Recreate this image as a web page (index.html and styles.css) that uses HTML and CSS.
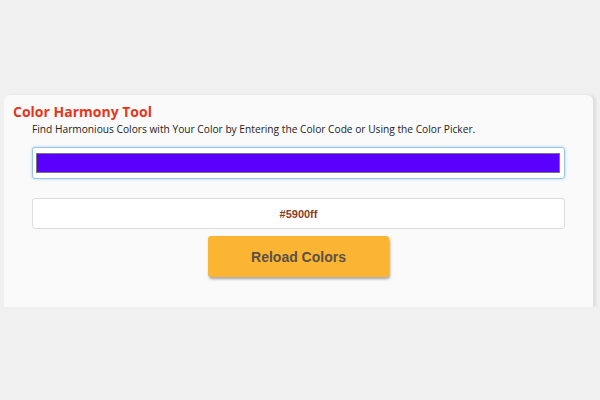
FILE: index.html
```html
<!DOCTYPE html>
<html lang="en">
<head>
  <meta charset="UTF-8">
  <title>Color Harmony Tool</title>
  <link rel="stylesheet" href="styles.css">
</head>
<body>
  <div class="card">
    <h1 class="title">Color Harmony Tool</h1>
    <p class="subtitle">Find Harmonious Colors with Your Color by Entering the Color Code or Using the Color Picker.</p>

    <div class="fields">
      <input type="color" id="picker" class="picker" value="#5900ff">
      <input type="text" id="code" class="code" value="#5900ff">
      <button class="reload-btn" id="reloadBtn">Reload Colors</button>
    </div>
  </div>

  <script>
    // sincroniza o seletor com o campo de texto
    var picker = document.getElementById('picker');
    var code = document.getElementById('code');

    picker.addEventListener('input', function() {
      code.value = picker.value;
    });

    code.addEventListener('change', function() {
      if (/^#[0-9a-f]{6}$/i.test(code.value)) {
        picker.value = code.value;
      }
    });
  </script>
</body>
</html>
```

FILE: styles.css
```css
/* Estilos */
body {
  margin: 0;
  background-color: #f0f0f0;
  font-family: "Comic Sans MS", "Open Sans", sans-serif;
  color: #222;
}
.card {
  margin: 95px 7px 0 4px;
  height: 212px;
  box-sizing: border-box;
  background-color: #fafafa;
  border-radius: 6px 6px 0 0;
  box-shadow: 3px 0 3px rgba(0, 0, 0, 0.08);
  padding: 9px 0 0 9px;
}
.title {
  margin: 0;
  font-size: 14px;
  font-weight: bold;
  color: #e8341c;
  line-height: 16px;
}
.subtitle {
  margin: 2px 0 0 19px;
  font-size: 10.2px;
  line-height: 15px;
}
.fields {
  display: flex;
  flex-direction: column;
  align-items: center;
  margin: 10px 0 0 19px;
  width: 533px;
}
.picker {
  -webkit-appearance: none;
  appearance: none;
  width: 533px;
  height: 32px;
  box-sizing: border-box;
  padding: 0;
  border: 1px solid #9cc6e8;
  border-radius: 3px;
  background-color: #fff;
  box-shadow: 0 0 3px rgba(90, 160, 220, 0.5);
  cursor: pointer;
}
.picker::-webkit-color-swatch-wrapper {
  padding: 5px 4px 5px 3px;
}
.picker::-webkit-color-swatch {
  border: 1px solid #777;
  border-radius: 0;
}
.code {
  width: 533px;
  height: 31px;
  box-sizing: border-box;
  margin-top: 19px;
  border: 1px solid #ddd;
  border-radius: 3px;
  background-color: #fff;
  text-align: center;
  font-family: "Liberation Sans", Arial, sans-serif;
  font-weight: bold;
  font-size: 11px;
  color: #8a3c1e;
}
.reload-btn {
  width: 181px;
  height: 41px;
  margin-top: 7px;
  border: none;
  border-radius: 3px;
  background-color: #fbb532;
  color: #5a5048;
  font-family: "Liberation Sans", Arial, sans-serif;
  font-weight: bold;
  font-size: 14px;
  box-shadow: 1px 2px 3px rgba(0, 0, 0, 0.35);
  cursor: pointer;
}
```
